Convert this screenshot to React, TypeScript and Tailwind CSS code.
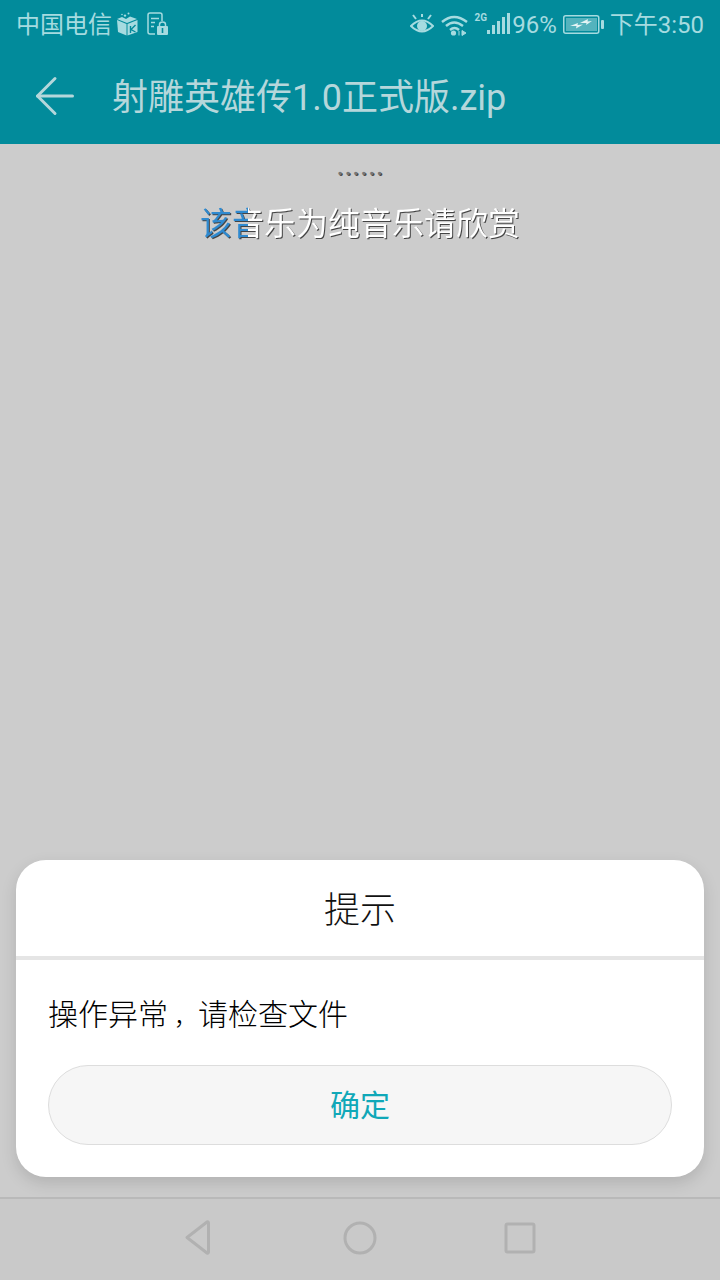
import { ArrowLeft } from 'lucide-react';

const cjk = 'font-["Roboto","Noto_Sans_CJK_SC",sans-serif]';

function BoxIcon() {
	return (
		<svg width="22" height="24" viewBox="0 0 22 24" className="ml-[4px]">
			<path d="M1 8 L10.5 12 L10.5 23.5 L2 20 Z" fill="#a6dbe0" />
			<path d="M1 7 L6 5 L10 7 L14 4.5 L21 7 L11 11 Z" fill="#a6dbe0" />
			<path d="M11.5 12 L21.5 8 L21.5 20 L11.5 23.5 Z" fill="#a6dbe0" />
			<path d="M14.5 14 L14.5 21 M19.5 13 L15 17.5 L19.5 20" stroke="#028b9b" strokeWidth="1.4" fill="none" />
			<circle cx="9" cy="3.6" r="1.2" fill="#a6dbe0" />
			<circle cx="12.5" cy="1.4" r="1" fill="#a6dbe0" />
			<circle cx="6" cy="2.5" r="0.8" fill="#a6dbe0" />
		</svg>
	);
}

function FileLockIcon() {
	return (
		<svg width="21" height="24" viewBox="0 0 21 24" className="ml-[9px]">
			<path d="M15 9 L15 3 Q15 1 13 1 L3 1 Q1 1 1 3 L1 20 Q1 22 3 22 L8 22" stroke="#a6dbe0" strokeWidth="1.5" fill="none" />
			<path d="M4 6.5 H12 M4 10.5 H8 M4 14.5 H7" stroke="#a6dbe0" strokeWidth="1.5" />
			<rect x="10" y="14" width="11" height="9" rx="1" fill="#a6dbe0" />
			<path d="M12.5 14 V12.5 Q12.5 10 15.5 10 Q18.5 10 18.5 12.5 V14" stroke="#a6dbe0" strokeWidth="1.5" fill="none" />
			<rect x="14.7" y="16" width="1.6" height="5" fill="#028b9b" />
		</svg>
	);
}

function EyeIcon() {
	return (
		<svg width="24" height="20" viewBox="0 0 24 20">
			<path d="M1 12 Q12 1 23 12 Q12 23 1 12 Z" stroke="#a6dbe0" strokeWidth="2" fill="none" />
			<circle cx="12" cy="12" r="5" fill="#a6dbe0" />
			<path d="M3 1 L6 5 M21 1 L18 5 M12 0 V3" stroke="#a6dbe0" strokeWidth="2" />
		</svg>
	);
}

function WifiIcon() {
	return (
		<svg width="27" height="22" viewBox="0 0 27 22">
			<path d="M1 8 Q13 -2 26 8" stroke="#a6dbe0" strokeWidth="2.4" fill="none" />
			<path d="M5 12 Q13 5 22 12" stroke="#a6dbe0" strokeWidth="2.4" fill="none" />
			<path d="M9 16 Q13.5 12 18 16" stroke="#a6dbe0" strokeWidth="2.4" fill="none" />
			<circle cx="12.5" cy="19" r="2.6" fill="#a6dbe0" />
			<path d="M18 17 L18 21.5 M21 21.5 L21 16.5 L25 19 Z" stroke="#a6dbe0" strokeWidth="1" fill="#a6dbe0" />
		</svg>
	);
}

function SignalIcon() {
	return (
		<svg width="23" height="21" viewBox="0 0 23 21">
			<rect x="0" y="17" width="3" height="4" fill="#a6dbe0" />
			<rect x="5" y="12" width="3" height="9" fill="#a6dbe0" />
			<rect x="10" y="8" width="3" height="13" fill="#a6dbe0" />
			<rect x="15" y="4" width="3" height="17" fill="#a6dbe0" />
			<rect x="20" y="0" width="3" height="21" fill="#a6dbe0" />
		</svg>
	);
}

function BatteryIcon() {
	return (
		<svg width="41" height="19" viewBox="0 0 41 19">
			<rect x="0.75" y="0.75" width="35" height="17.5" rx="2" stroke="#a6dbe0" strokeWidth="1.5" fill="none" />
			<rect x="3" y="3" width="31" height="13" fill="#a6dbe0" fillOpacity="0.5" />
			<rect x="38" y="5" width="3" height="9" rx="1" fill="#a6dbe0" />
			<path d="M7 11 L15 8 L14.5 10 L20 9.5 L13 13.5 L13.5 11 Z M17 8 L25 4 L24.5 6.5 L29 6 L23 10 L23.5 8 Z" fill="#e4f4f5" />
		</svg>
	);
}

export default function App() {
	return (
		<div className={`flex h-[1280px] w-[720px] flex-col overflow-hidden bg-[#cccccc] ${cjk}`}>
			<div className="flex h-12 items-center bg-[#028b9b] pl-[16px] pr-[16px] text-[24px] text-[#a6dbe0]">
				<span className="pt-[2px] leading-none">中国电信</span>
				<BoxIcon />
				<FileLockIcon />
				<div className="ml-auto flex items-center">
					<div className="mb-[1px]"><EyeIcon /></div>
					<div className="ml-[7px] mb-[-1px]"><WifiIcon /></div>
					<span className="mb-[13px] ml-[7px] text-[10px] font-bold leading-none">2G</span>
					<div className="mb-[1px]"><SignalIcon /></div>
					<span className="ml-[2px] pt-[2px] leading-none">96%</span>
					<div className="ml-[6px]"><BatteryIcon /></div>
					<span className="ml-[6px] pt-[2px] leading-none">下午3:50</span>
				</div>
			</div>

			<div className="flex h-24 items-center bg-[#028b9b] pl-[25px] text-[36px] text-[#b5d7db]">
				<ArrowLeft size={60} strokeWidth={3} absoluteStrokeWidth className="text-[#b5d7db]" />
				<span className="ml-[27px] pt-[3px] leading-none">射雕英雄传1.0正式版.zip</span>
			</div>

			<main className="flex flex-1 flex-col justify-between px-4 pb-5">
				<div className="flex flex-col items-center">
					<div className="mt-[2px] h-[56px] text-[30px] leading-[38px] text-[#777777] [text-shadow:1px_1px_0_#444444]">......</div>
					<div className="bg-[linear-gradient(90deg,#2f8ad0_48px,#ffffff_48px)] bg-clip-text text-[32px] leading-[44px] text-transparent [filter:drop-shadow(1px_1px_0.5px_#444444)]">
						该音乐为纯音乐请欣赏
					</div>
				</div>

				<div className="flex h-[317px] flex-col rounded-[30px] bg-white shadow-[0_6px_16px_rgba(0,0,0,0.13)]">
					<div className="flex h-[96px] items-center justify-center pt-[5px] text-[36px] font-light leading-none text-[#111111]">提示</div>
					<div className="h-[4px] bg-[#e5e5e5]" />
					<div className="flex flex-1 flex-col px-8">
						<div className="mt-[37px] flex items-baseline text-[30px] font-light leading-[36px] text-black">
							<span>操作异常</span>
							<span className="w-[30px] pl-[6px] text-[24px]">，</span>
							<span>请检查文件</span>
						</div>
						<button className="mt-[30px] flex h-[80px] items-center justify-center rounded-[40px] border border-[#dddddd] bg-[#f6f6f6] pt-[1px] text-[30px] text-[#10a8b8]">确定</button>
					</div>
				</div>
			</main>

			<nav className="flex h-[83px] items-center justify-center gap-[120px] border-t-2 border-[#b9b9b9] bg-[#c9c9c9] pb-1">
				<svg width="40" height="40" viewBox="0 0 40 40">
					<path d="M7 19.5 L27 4 Q28.5 3.5 28.5 5 V34 Q28.5 35.5 27 35 Z" stroke="#b1b1b1" strokeWidth="3" strokeLinejoin="round" fill="none" />
				</svg>
				<svg width="40" height="40" viewBox="0 0 40 40">
					<circle cx="20" cy="20" r="15" stroke="#b1b1b1" strokeWidth="3" fill="none" />
				</svg>
				<svg width="40" height="40" viewBox="0 0 40 40">
					<rect x="6" y="6" width="28" height="28" rx="1.5" stroke="#b1b1b1" strokeWidth="3" fill="none" />
				</svg>
			</nav>
		</div>
	);
}
